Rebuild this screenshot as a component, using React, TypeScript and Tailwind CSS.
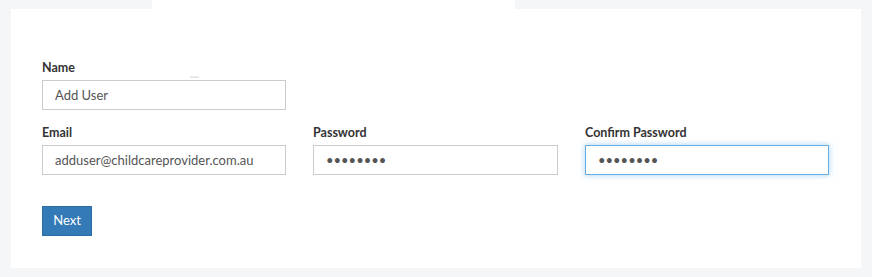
import { useState } from 'react';

// ─────────────────────────────────────────────
// Field
// ─────────────────────────────────────────────

type FieldProps = {
  label: string;
  type?: string;
  value: string;
  focused?: boolean;
  onChange: (value: string) => void;
};

function Field({ label, type = 'text', value, focused = false, onChange }: FieldProps) {
  return (
    <div className="flex flex-col">
      <label className="mb-[4px] block h-[17px] text-[12.5px] font-bold leading-[17px] text-[#333]">{label}</label>
      <input
        type={type}
        value={value}
        onChange={(e) => onChange(e.target.value)}
        className={`h-[30px] w-full border bg-white px-[12px] text-[13px] text-[#555] outline-none ${
          focused
            ? 'border-[#66afe9] shadow-[0_0_6px_rgba(102,175,233,0.6)]'
            : 'border-[#ccc]'
        }`}
      />
    </div>
  );
}

// ─────────────────────────────────────────────
// Page
// ─────────────────────────────────────────────

export default function App() {
  const [name, setName] = useState('Add User');
  const [email, setEmail] = useState('adduser@childcareprovider.com.au');
  const [password, setPassword] = useState('12345678');
  const [confirm, setConfirm] = useState('12345678');

  return (
    <div className="min-h-[277px] bg-[#f5f6f8] px-[11px] pb-[9px] font-['Lato','Liberation_Sans',sans-serif]">
      {/* tab stub */}
      <div className="ml-[141px] h-[9px] w-[363px] bg-white" />

      <div className="relative bg-white pb-[32px] pl-[31px] pt-[50px]">
        <span
          className="absolute left-[179px] top-[67px] h-[2px] w-[9px] bg-gradient-to-b from-[#f0f0f0] to-[#e2e2e2]"
          aria-hidden="true"
        />

        <div className="w-[244px]">
          <Field label="Name" value={name} onChange={setName} />
        </div>

        <div className="mt-[14px] grid grid-cols-[244px_245px_244px] gap-x-[27px]">
          <Field label="Email" value={email} onChange={setEmail} />
          <Field label="Password" type="password" value={password} onChange={setPassword} />
          <Field label="Confirm Password" type="password" value={confirm} focused onChange={setConfirm} />
        </div>

        <button
          type="button"
          className="mt-[31px] h-[30px] w-[50px] border border-[#2e6da4] bg-[#337ab7] text-[13px] text-white"
        >
          Next
        </button>
      </div>
    </div>
  );
}
